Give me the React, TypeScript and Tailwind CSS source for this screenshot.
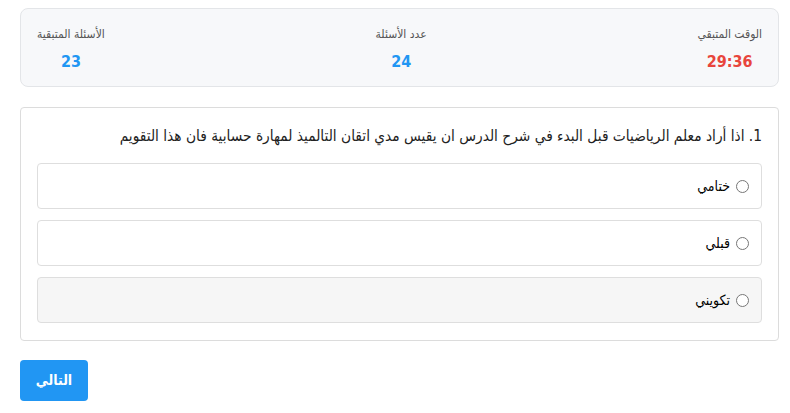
import { useState } from "react";

const stats = [
  { label: "الوقت المتبقي", value: "29:36", tone: "text-[#e8453c]" },
  { label: "عدد الأسئلة", value: "24", tone: "text-[#2196f3]" },
  { label: "الأسئلة المتبقية", value: "23", tone: "text-[#2196f3]" },
];

const options = ["ختامي", "قبلي", "تكويني"];

export default function App() {
  const [picked, setPicked] = useState<string | null>(null);

  return (
    <div
      dir="rtl"
      className="min-h-[413px] bg-white pt-2 pr-[11px] pl-5 text-[#222] font-['DejaVu_Sans_Condensed','DejaVu_Sans',sans-serif]"
    >
      {/* Stats bar */}
      <div className="flex justify-between rounded-lg border border-[#e3e5e8] bg-[#f7f8fa] px-4 pt-4 pb-[14px]">
        {stats.map((s) => (
          <div key={s.label} className="flex flex-col items-center">
            <span className="text-[12px] leading-[18px] text-[#555]">{s.label}</span>
            <span className={`mt-[9px] text-[16px] font-bold leading-5 ${s.tone}`}>{s.value}</span>
          </div>
        ))}
      </div>

      {/* Question card */}
      <div className="mt-5 rounded border border-[#dcdcdc] bg-white px-4 pt-4 pb-[17px]">
        <p className="mb-[15px] text-[15.3px] leading-6 text-[#222]">
          1. اذا أراد معلم الرياضيات قبل البدء في شرح الدرس ان يقيس مدي اتقان التالميذ لمهارة حسابية فان هذا التقويم
        </p>
        <div className="flex flex-col gap-[11px]">
          {options.map((o, i) => (
            <label
              key={o}
              className={`flex h-[46px] cursor-pointer items-center gap-[6px] rounded border border-[#dedede] px-3 ${
                i === 2 ? "bg-[#f6f6f6]" : "bg-white"
              }`}
            >
              <input
                type="radio"
                name="q1"
                checked={picked === o}
                onChange={() => setPicked(o)}
                className="m-0 h-[13px] w-[13px]"
              />
              <span className="text-[14px] text-black">{o}</span>
            </label>
          ))}
        </div>
      </div>

      <div className="mt-[19px] flex justify-end">
        <button className="h-[41px] w-[68px] rounded bg-[#2196f3] text-[14px] font-bold text-white">
          التالي
        </button>
      </div>
    </div>
  );
}
